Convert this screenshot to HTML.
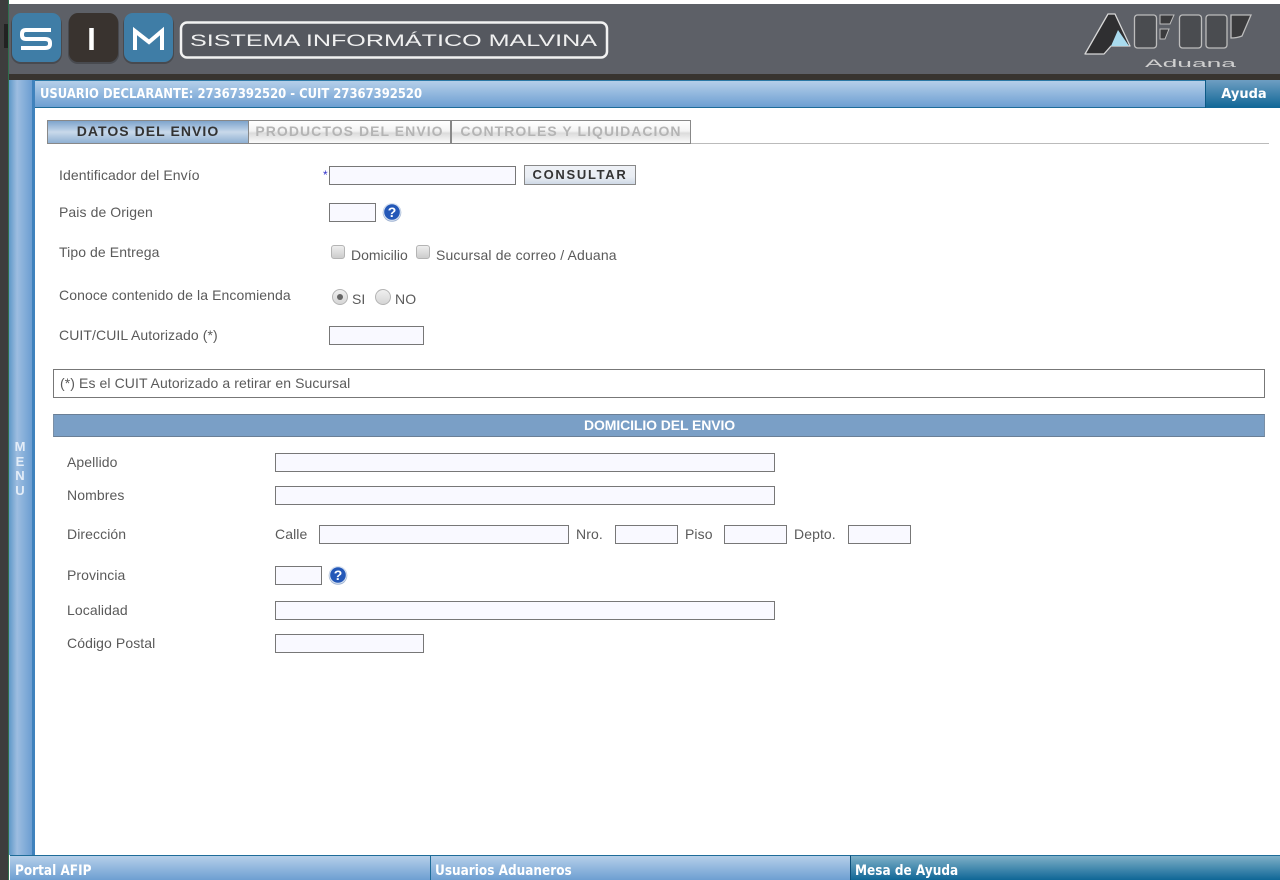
<!DOCTYPE html>
<html lang="es"><head><meta charset="utf-8"><title>SIM</title>
<style>
html,body{margin:0;padding:0;background:#fff}
#p{position:relative;width:1280px;height:880px;overflow:hidden;background:#fff;font-family:"Liberation Sans",Arial,sans-serif;font-size:14px;color:#5a5a5a}
#p div,#p span.t{position:absolute;white-space:nowrap}
.t{line-height:16px;letter-spacing:.09px}
.i{box-sizing:border-box;border:1px solid #777;background:#f9f9ff;height:19px}
.bar{background:linear-gradient(#b5cfe9,#6d9fd2)}
.foot{font-family:"DejaVu Sans",sans-serif;font-weight:700;font-size:14px;color:#fff;transform-origin:0 50%;transform:scaleX(.864);line-height:16px}
.tab{box-sizing:border-box;height:24px;border:1px solid #888;font-weight:700;font-size:14px;letter-spacing:1.05px;line-height:20px;text-align:center;color:#b4b4b4;background:linear-gradient(#fff 0,#f4f4f4 45%,#dcdcdc 55%,#fbfbfb 100%)}
.cb{box-sizing:border-box;width:14px;height:14px;border:1px solid #b4b4b4;border-radius:3px;background:linear-gradient(#eee,#ccc)}
.rd{box-sizing:border-box;width:16px;height:16px;border:1px solid #b4b4b4;border-radius:50%;background:linear-gradient(#f0f0f0,#d5d5d5)}
</style></head><body><div id="p">
<div style="left:0;top:4px;width:1280px;height:70px;background:#5d6067"></div>
<div style="left:0;top:74px;width:1280px;height:6px;background:#38342f"></div>
<div style="left:0;top:0;width:8px;height:880px;background:#3d3d3d"></div>
<div style="left:4px;top:24px;width:4px;height:24px;background:#222"></div>
<div style="left:8px;top:0;width:1px;height:880px;background:#2f6f4d"></div>
<div style="left:9px;top:0;width:1272px;height:4px;background:#fff"></div>

<svg style="position:absolute;left:0;top:0" width="1280" height="80" viewBox="0 0 1280 80">
<rect x="11" y="14" width="51" height="50" rx="10" fill="#484a4f"/>
<rect x="68" y="14" width="51" height="50" rx="10" fill="#484a4f"/>
<rect x="123" y="14" width="51" height="50" rx="10" fill="#484a4f"/>
<rect x="12" y="13" width="49" height="49" rx="9" fill="#3f7da6"/>
<rect x="69" y="13" width="49" height="49" rx="9" fill="#39332f"/>
<rect x="124" y="13" width="49" height="49" rx="9" fill="#3f7da6"/>
<path d="M51 30H26q-4 0-4 4v1q0 4 4 4h19q5 0 5 4v1q0 4-5 4H21" fill="none" stroke="#fff" stroke-width="4"/>
<path d="M91.500 28V50" stroke="#fff" stroke-width="4.500" fill="none"/>
<path d="M135 50V31L149 42L162 31V50" fill="none" stroke="#fff" stroke-width="4"/>
<rect x="181" y="22.500" width="426" height="35" rx="6" fill="#55585f" stroke="#f2f2f2" stroke-width="2.500"/>
<text x="190" y="46" font-family="Liberation Sans,sans-serif" font-size="17" fill="#f0f0f0" textLength="407" lengthAdjust="spacingAndGlyphs">SISTEMA INFORMÁTICO MALVINA</text>
<path d="M1085 54L1108 14H1115L1130 46H1111L1104 54Z" fill="#2f2f31" stroke="#d8d8d8" stroke-width="1.300" stroke-linejoin="round"/>
<path d="M1118 30L1129 46H1111Z" fill="#a9dbee"/>
<rect x="1134.500" y="15" width="22" height="33" rx="3" fill="#4a4c50" stroke="#bdbdbd" stroke-width="1.300"/>
<path d="M1160 15H1174L1170 24H1160Z M1160 29H1169L1165 39H1160Z" fill="#3b3b3d" stroke="#bdbdbd" stroke-width="1"/>
<rect x="1179.500" y="15" width="22" height="33" rx="3" fill="#4a4c50" stroke="#bdbdbd" stroke-width="1.300"/>
<rect x="1206" y="15" width="21" height="33" rx="3" fill="#4a4c50" stroke="#bdbdbd" stroke-width="1.300"/>
<path d="M1231 15H1251L1242 36Q1237 38 1231 38Z" fill="#3b3b3d" stroke="#bdbdbd" stroke-width="1.300"/>
<text x="1145" y="67" font-family="Liberation Sans,sans-serif" font-size="11" fill="#cfcfcf" textLength="91" lengthAdjust="spacingAndGlyphs">Aduana</text>
</svg>

<div style="left:9px;top:80px;width:23px;height:775px;background:linear-gradient(90deg,#5f98c8,#9dbde0 35%,#6c9ed2)"></div>
<div style="left:32px;top:80px;width:3px;height:775px;background:#3f82bd"></div>
<div style="left:13px;top:440px;width:14px;font-weight:700;font-size:13px;line-height:14.500px;text-align:center;color:#e3edf8;white-space:normal">M<br>E<br>N<br>U</div>

<div class="bar" style="left:35px;top:80px;width:1170px;border-bottom:1px solid #1e6c99;border-top:1px solid #2a78a5;box-sizing:border-box;height:28px"></div>
<div class="foot" style="left:40px;top:87px;font-size:13px;transform:scaleX(.892)">USUARIO DECLARANTE: 27367392520 - CUIT 27367392520</div>
<div style="left:1205px;top:80px;width:75px;height:28px;box-sizing:border-box;border-left:1px solid #0c5a86;background:linear-gradient(#6e9ec2,#0f6696);color:#fff;font-family:'DejaVu Sans',sans-serif;font-weight:700;font-size:13px;line-height:29px;text-align:center;padding-left:2px">Ayuda</div>

<div style="left:47px;top:143px;width:1222px;height:1px;background:#bbb"></div>
<div class="tab" style="left:47px;top:120px;width:202px;color:#333;background:linear-gradient(#7ea4cc 0,#b7cde5 40%,#c9d9ea 50%,#8fb0d3 100%)">DATOS DEL ENVIO</div>
<div class="tab" style="left:249px;top:120px;width:202px;border-left:0">PRODUCTOS DEL ENVIO</div>
<div class="tab" style="left:451px;top:120px;width:240px;border-left:1px solid #888">CONTROLES Y LIQUIDACION</div>

<span class="t" style="left:59px;top:167px">Identificador del Envío</span>
<span class="t" style="left:323px;top:167px;color:#33c;font-size:12px">*</span>
<div class="i" style="left:329px;top:166px;width:187px"></div>
<div style="left:524px;top:165px;width:112px;height:20px;box-sizing:border-box;border:1px solid #888;background:linear-gradient(#eef1f6,#e9edf3 60%,#cfd9e6);font-weight:700;font-size:13px;letter-spacing:1.7px;line-height:18px;text-align:center;color:#333">CONSULTAR</div>

<span class="t" style="left:59px;top:204px">Pais de Origen</span>
<div class="i" style="left:329px;top:203px;width:47px"></div>
<svg style="position:absolute;left:382px;top:202px" width="20" height="20" viewBox="0 0 20 20"><circle cx="10" cy="10.500" r="9.300" fill="#9fb3d2"/><circle cx="10" cy="10" r="8.300" fill="#2458b8" stroke="#dbe5f3" stroke-width="1"/><text x="10" y="15" text-anchor="middle" font-family="Liberation Sans,sans-serif" font-weight="700" font-size="14" fill="#fff">?</text></svg>

<span class="t" style="left:59px;top:244px">Tipo de Entrega</span>
<div class="cb" style="left:331px;top:245px"></div>
<span class="t" style="left:351px;top:247px;letter-spacing:0">Domicilio</span>
<div class="cb" style="left:416px;top:245px"></div>
<span class="t" style="left:436px;top:247px;letter-spacing:.15px">Sucursal de correo / Aduana</span>

<span class="t" style="left:59px;top:287px">Conoce contenido de la Encomienda</span>
<div class="rd" style="left:332px;top:289px"></div>
<div style="left:337px;top:294px;width:6px;height:6px;border-radius:50%;background:#666"></div>
<span class="t" style="left:352px;top:291px">SI</span>
<div class="rd" style="left:375px;top:289px"></div>
<span class="t" style="left:395px;top:291px">NO</span>

<span class="t" style="left:59px;top:327px">CUIT/CUIL Autorizado (*)</span>
<div class="i" style="left:329px;top:326px;width:95px"></div>

<div style="left:53px;top:369px;width:1212px;height:29px;box-sizing:border-box;border:1px solid #777;padding-left:6px;line-height:27px;letter-spacing:.09px">(*) Es el CUIT Autorizado a retirar en Sucursal</div>

<div style="left:53px;top:414px;width:1212px;height:23px;box-sizing:border-box;background:#7a9fc6;border-top:1px solid #6a7f96;border-bottom:1px solid #6a7f96;border-left:1px solid #7a8fa6;border-right:1px solid #7a8fa6;color:#fff;font-weight:700;line-height:20px;text-align:center;letter-spacing:-.1px;padding-left:1px">DOMICILIO DEL ENVIO</div>

<span class="t" style="left:67px;top:454px">Apellido</span>
<div class="i" style="left:275px;top:453px;width:500px"></div>
<span class="t" style="left:67px;top:487px">Nombres</span>
<div class="i" style="left:275px;top:486px;width:500px"></div>
<span class="t" style="left:67px;top:526px">Dirección</span>
<span class="t" style="left:275px;top:526px">Calle</span>
<div class="i" style="left:319px;top:525px;width:250px"></div>
<span class="t" style="left:576px;top:526px">Nro.</span>
<div class="i" style="left:615px;top:525px;width:63px"></div>
<span class="t" style="left:685px;top:526px">Piso</span>
<div class="i" style="left:724px;top:525px;width:63px"></div>
<span class="t" style="left:794px;top:526px">Depto.</span>
<div class="i" style="left:848px;top:525px;width:63px"></div>
<span class="t" style="left:67px;top:567px">Provincia</span>
<div class="i" style="left:275px;top:566px;width:47px"></div>
<svg style="position:absolute;left:328px;top:565px" width="20" height="20" viewBox="0 0 20 20"><circle cx="10" cy="10.500" r="9.300" fill="#9fb3d2"/><circle cx="10" cy="10" r="8.300" fill="#2458b8" stroke="#dbe5f3" stroke-width="1"/><text x="10" y="15" text-anchor="middle" font-family="Liberation Sans,sans-serif" font-weight="700" font-size="14" fill="#fff">?</text></svg>
<span class="t" style="left:67px;top:602px">Localidad</span>
<div class="i" style="left:275px;top:601px;width:500px"></div>
<span class="t" style="left:67px;top:635px">Código Postal</span>
<div class="i" style="left:275px;top:634px;width:149px"></div>

<div class="bar" style="left:10px;top:855px;width:420px;height:25px;border-top:1px solid #1e6c99;box-sizing:border-box"></div>
<div class="bar" style="left:430px;top:855px;width:420px;height:25px;border-top:1px solid #1e6c99;border-left:1px solid #1e6c99;box-sizing:border-box"></div>
<div style="left:850px;top:855px;width:430px;height:25px;border-top:1px solid #1e6c99;border-left:1px solid #0c4f78;box-sizing:border-box;background:linear-gradient(#7fb0c8,#0f6696)"></div>
<div class="foot" style="left:15px;top:863px">Portal AFIP</div>
<div class="foot" style="left:435px;top:863px">Usuarios Aduaneros</div>
<div class="foot" style="left:855px;top:863px">Mesa de Ayuda</div>
</div></body></html>
